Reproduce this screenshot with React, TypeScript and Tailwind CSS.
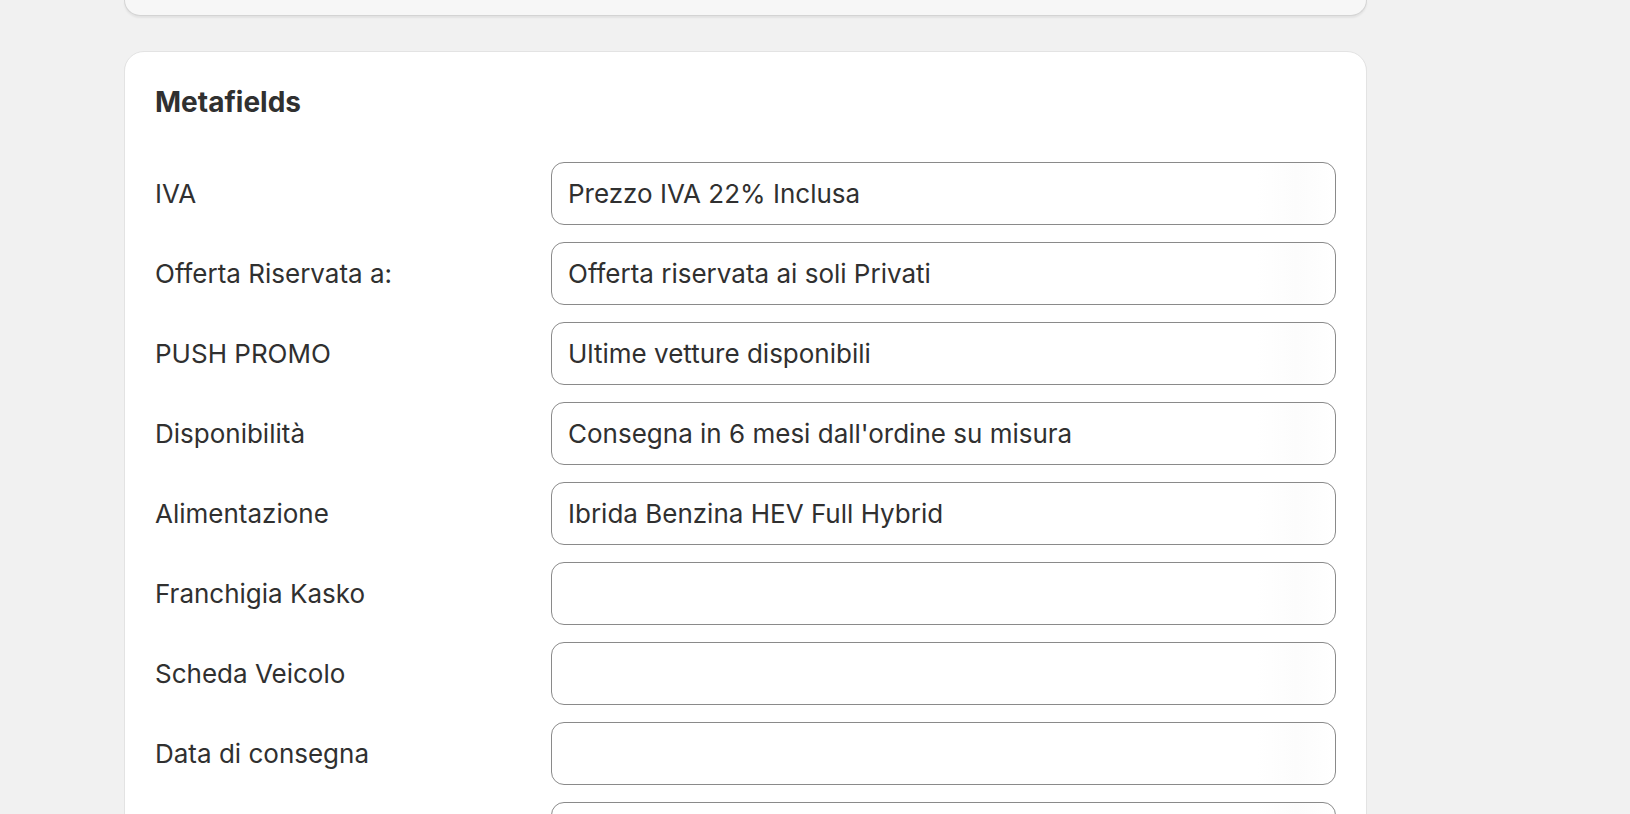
const fields = [
  { label: "IVA", value: "Prezzo IVA 22% Inclusa" },
  { label: "Offerta Riservata a:", value: "Offerta riservata ai soli Privati" },
  { label: "PUSH PROMO", value: "Ultime vetture disponibili" },
  { label: "Disponibilità", value: "Consegna in 6 mesi dall'ordine su misura" },
  { label: "Alimentazione", value: "Ibrida Benzina HEV Full Hybrid" },
  { label: "Franchigia Kasko", value: "" },
  { label: "Scheda Veicolo", value: "" },
  { label: "Data di consegna", value: "" },
  { label: "", value: "" },
];

function MetafieldRow({ label, value }: { label: string; value: string }) {
  return (
    <div className="grid grid-cols-[396px_785px] items-center">
      <label className="text-[26px] text-[#303030]">{label}</label>
      <input
        defaultValue={value}
        className="h-[63px] w-full rounded-[13px] border border-[#8a8a8a] bg-[linear-gradient(to_right,#ffffff_90%,#fcfcfc_95%,#ffffff)] px-[16px] text-[26px] text-[#303030] outline-none"
      />
    </div>
  );
}

export default function App() {
  return (
    <div
      className="h-[814px] overflow-hidden bg-[#f1f1f1] pl-[124px]"
      style={{ fontFamily: "Inter, 'Noto Sans', sans-serif" }}
    >
      {/* previous card, scrolled mostly out of view */}
      <div className="h-[16px] w-[1243px] rounded-b-[20px] border-x border-b border-[#d4d4d4] bg-[#f7f7f7] shadow-[0_2px_2px_rgba(0,0,0,0.06)]" />

      {/* Metafields card */}
      <div className="mt-[35px] w-[1243px] rounded-[20px] border border-[#e3e3e3] bg-white pl-[30px] pr-[30px] pt-[32px] pb-8 shadow-[0_1px_0_rgba(0,0,0,0.08)]">
        <h2 className="text-[28px] leading-[37px] font-bold text-[#303030]">
          Metafields
        </h2>

        <div className="mt-[41px] flex flex-col gap-[17px]">
          {fields.map((f, i) => (
            <MetafieldRow key={i} label={f.label} value={f.value} />
          ))}
        </div>
      </div>
    </div>
  );
}
